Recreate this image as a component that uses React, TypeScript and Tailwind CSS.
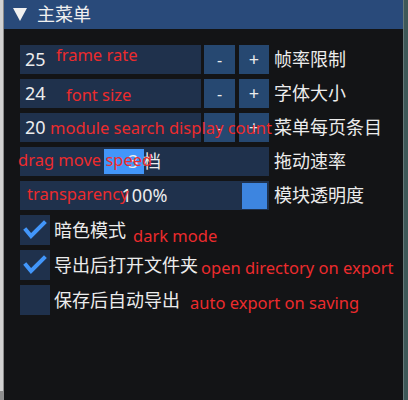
import React from 'react';

const font = { fontFamily: '"Noto Sans", "Noto Sans CJK SC", sans-serif' };

function StepRow({ value, label }: { value: string; label: string }) {
    return (
        <div className="flex h-[29px] items-stretch">
            <div className="flex w-[181px] items-center bg-[#1f314c] pl-[5px] text-[18px] text-[#ececec]">{value}</div>
            <div className="ml-[3px] flex w-[31px] items-center justify-center bg-[#264871] text-[16px] text-[#ececec]">-</div>
            <div className="ml-[4px] flex w-[30px] items-center justify-center bg-[#264871] text-[18px] text-[#ececec]">+</div>
            <div className="ml-[5px] flex items-center text-[18px] text-[#ececec]">{label}</div>
        </div>
    );
}

function SliderRow({ text, label, grab }: { text: string; label: string; grab: 'mid' | 'end' }) {
    return (
        <div className="flex h-[29px] items-stretch">
            <div className="relative flex w-[249px] items-center justify-center bg-[#1f314c] text-[18px] text-[#ececec]">
                {grab === 'mid' ? (
                    <div className="absolute left-[84px] top-[2px] h-[25px] w-[40px] bg-[#4296fa]" />
                ) : (
                    <div className="absolute left-[222px] top-[2px] h-[26px] w-[25px] bg-[#3d85e0]" />
                )}
                <span className="relative">{text}</span>
            </div>
            <div className="ml-[5px] flex items-center text-[18px] text-[#ececec]">{label}</div>
        </div>
    );
}

function CheckRow({ checked, label }: { checked: boolean; label: string }) {
    return (
        <div className="flex h-[30px] items-center">
            <div className="h-[30px] w-[30px] bg-[#1f314c]">
                {checked && (
                    <svg width="30" height="30" viewBox="0 0 30 30">
                        <polyline points="6,15 11,21 24,8" fill="none" stroke="#4296fa" strokeWidth="4" strokeLinecap="square" />
                    </svg>
                )}
            </div>
            <div className="ml-[4px] text-[18px] text-[#ececec]">{label}</div>
        </div>
    );
}

// red annotations drawn over the menu, page coordinates
const notes = [
    { text: 'frame rate', x: 56, y: 46 },
    { text: 'font size', x: 66, y: 86 },
    { text: 'module search display count', x: 50, y: 119 },
    { text: 'drag move speed', x: 18, y: 151 },
    { text: 'transparency', x: 27, y: 185 },
    { text: 'dark mode', x: 133, y: 227 },
    { text: 'open directory on export', x: 201, y: 259 },
    { text: 'auto export on saving', x: 190, y: 294 },
];

export default function App() {
    return (
        <div className="relative flex h-[400px] w-[408px] overflow-hidden" style={font}>
            <div className="flex w-[4px] flex-col">
                <div className="flex flex-1">
                    <div className="w-[3px] bg-[#d2d2d2]" />
                    <div className="w-[1px] bg-[#8c8c8c]" />
                </div>
                <div className="h-[9px] bg-[#8e8e8e]" />
            </div>

            <div className="flex flex-1 flex-col bg-[#131416]">
                <div className="flex h-[29px] items-center bg-[#294a7a] pl-[9px] text-[18px] text-[#f0f0f0]">
                    <svg width="14" height="13" viewBox="0 0 14 13">
                        <polygon points="0,0 14,0 7,13" fill="#f0f0f0" />
                    </svg>
                    <span className="ml-[10px]">主菜单</span>
                </div>
                <div className="flex flex-col gap-[5px] pl-[16px] pt-[16px]">
                    <StepRow value="25" label="帧率限制" />
                    <StepRow value="24" label="字体大小" />
                    <StepRow value="20" label="菜单每页条目" />
                    <SliderRow text="3 档" label="拖动速率" grab="mid" />
                    <SliderRow text="100%" label="模块透明度" grab="end" />
                    <CheckRow checked label="暗色模式" />
                    <CheckRow checked label="导出后打开文件夹" />
                    <CheckRow checked={false} label="保存后自动导出" />
                </div>
            </div>

            <div className="flex w-[5px]">
                <div className="w-[1px] bg-[#667878]" />
                <div className="flex-1 bg-[#3e5858]" />
            </div>

            {notes.map(n => (
                <div
                    key={n.text}
                    className="absolute whitespace-nowrap text-[16.5px] leading-[18px] text-[#ec2b2d]"
                    style={{ left: n.x, top: n.y }}
                >
                    {n.text}
                </div>
            ))}
        </div>
    );
}
